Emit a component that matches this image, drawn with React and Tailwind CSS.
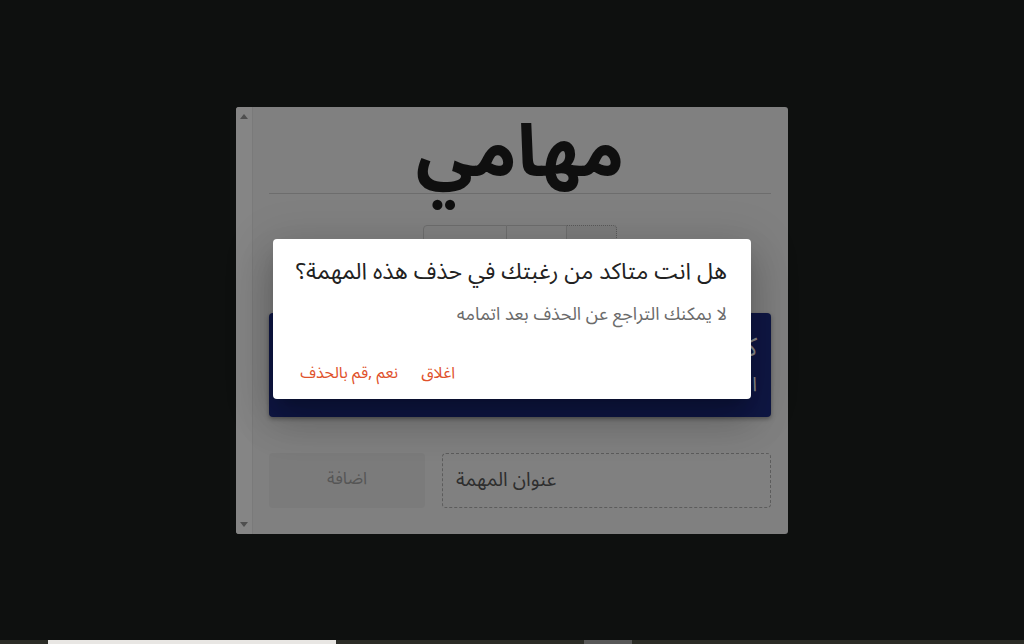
import React from 'react';

const arabic = { fontFamily: '"Noto Sans Arabic", "Noto Naskh Arabic", "DejaVu Sans", sans-serif' };

const ScrollArrow = ({ down }) => (
    <svg width="8" height="5" viewBox="0 0 8 5" className={down ? 'rotate-180' : ''}>
        <path d="M0 5 L4 0 L8 5 Z" fill="#4f4f4f" />
    </svg>
);

const FilterButtons = () => (
    <div className="flex justify-center mt-[31px]">
        <div className="flex h-[38px]" dir="ltr">
            <div className="w-[84px] border border-[#6e6e6e] rounded-l-[4px]"></div>
            <div className="w-[60px] border-y border-r border-[#6e6e6e]"></div>
            <div className="w-[50px] border-y border-r border-dotted border-[#5a5a5a] rounded-r-[4px] bg-[#7c7c7c]"></div>
        </div>
    </div>
);

const TaskCard = () => (
    <div className="mt-[50px] h-[104px] rounded-[4px] bg-[#0f1745] shadow-[0_2px_4px_rgba(0,0,0,0.35)] flex flex-col items-start justify-center gap-[10px] pr-[14px]" dir="rtl">
        <div className="text-[26px] leading-[30px] text-[#8d8d8d]">كتابة تقرير المشروع</div>
        <div className="text-[20px] leading-[24px] text-[#8d8d8d]">ا</div>
    </div>
);

const AddTask = () => (
    <div className="mt-[36px] flex gap-[17px] h-[55px]" dir="ltr">
        <div className="w-[156px] rounded-[4px] bg-[#7b7b7b] flex items-center justify-center text-[17px] text-[#565656]">
            اضافة
        </div>
        <div className="flex-1 rounded-[4px] border border-dashed border-[#5c5c5c] flex items-center pl-[13px] text-[19.5px] text-[#2e2e2e]">
            عنوان المهمة
        </div>
    </div>
);

const ConfirmDialog = () => (
    <div className="absolute top-0 left-0 right-0 bottom-[6px] flex items-center justify-center">
        <div
            className="w-[478px] h-[160px] bg-white rounded-[4px] shadow-[0_11px_15px_-7px_rgba(0,0,0,0.2),0_24px_38px_3px_rgba(0,0,0,0.14),0_9px_46px_8px_rgba(0,0,0,0.12)] flex flex-col"
            dir="rtl"
        >
            <div className="px-[24px] pt-[17px] text-[23px] leading-[32px] text-[#222] whitespace-nowrap">
                هل انت متاكد من رغبتك في حذف هذه المهمة؟
            </div>
            <div className="px-[24px] pt-[13px] text-[18px] leading-[26px] text-[#6b6b6b]">
                لا يمكنك التراجع عن الحذف بعد اتمامه
            </div>
            <div className="mt-auto mb-[14px] flex gap-[23px] pr-[296px]">
                <div className="text-[16px] leading-[24px] text-[#e0512b]">اغلاق</div>
                <div className="text-[16px] leading-[24px] text-[#e0512b] whitespace-nowrap">نعم ,قم بالحذف</div>
            </div>
        </div>
    </div>
);

export default function App() {
    return (
        <div className="w-[1024px] h-[644px] bg-[#0e100f] flex flex-col overflow-hidden relative" style={arabic}>
            <div className="flex-1 flex items-center justify-center">
                <div className="w-[552px] h-[427px] bg-[#808080] rounded-[3px] flex overflow-hidden">
                    <div className="w-[17px] bg-[#858585] border-r border-[#7a7a7a] flex flex-col items-center justify-between py-[7px]">
                        <ScrollArrow />
                        <ScrollArrow down />
                    </div>
                    <div className="flex-1 pl-[16px] pr-[17px]">
                        <div className="h-[87px] border-b border-[#6d6d6d] flex justify-center items-start">
                            <div className="text-[73px] font-bold leading-[92px] text-[#0f0f0f]">مهامي</div>
                        </div>
                        <FilterButtons />
                        <TaskCard />
                        <AddTask />
                    </div>
                </div>
            </div>
            <div className="h-[4px] flex bg-[#2b2c26]">
                <div className="w-[48px]"></div>
                <div className="w-[288px] bg-[#e8e6e3]"></div>
                <div className="w-[248px]"></div>
                <div className="w-[48px] bg-[#585858]"></div>
            </div>
            <ConfirmDialog />
        </div>
    );
}
